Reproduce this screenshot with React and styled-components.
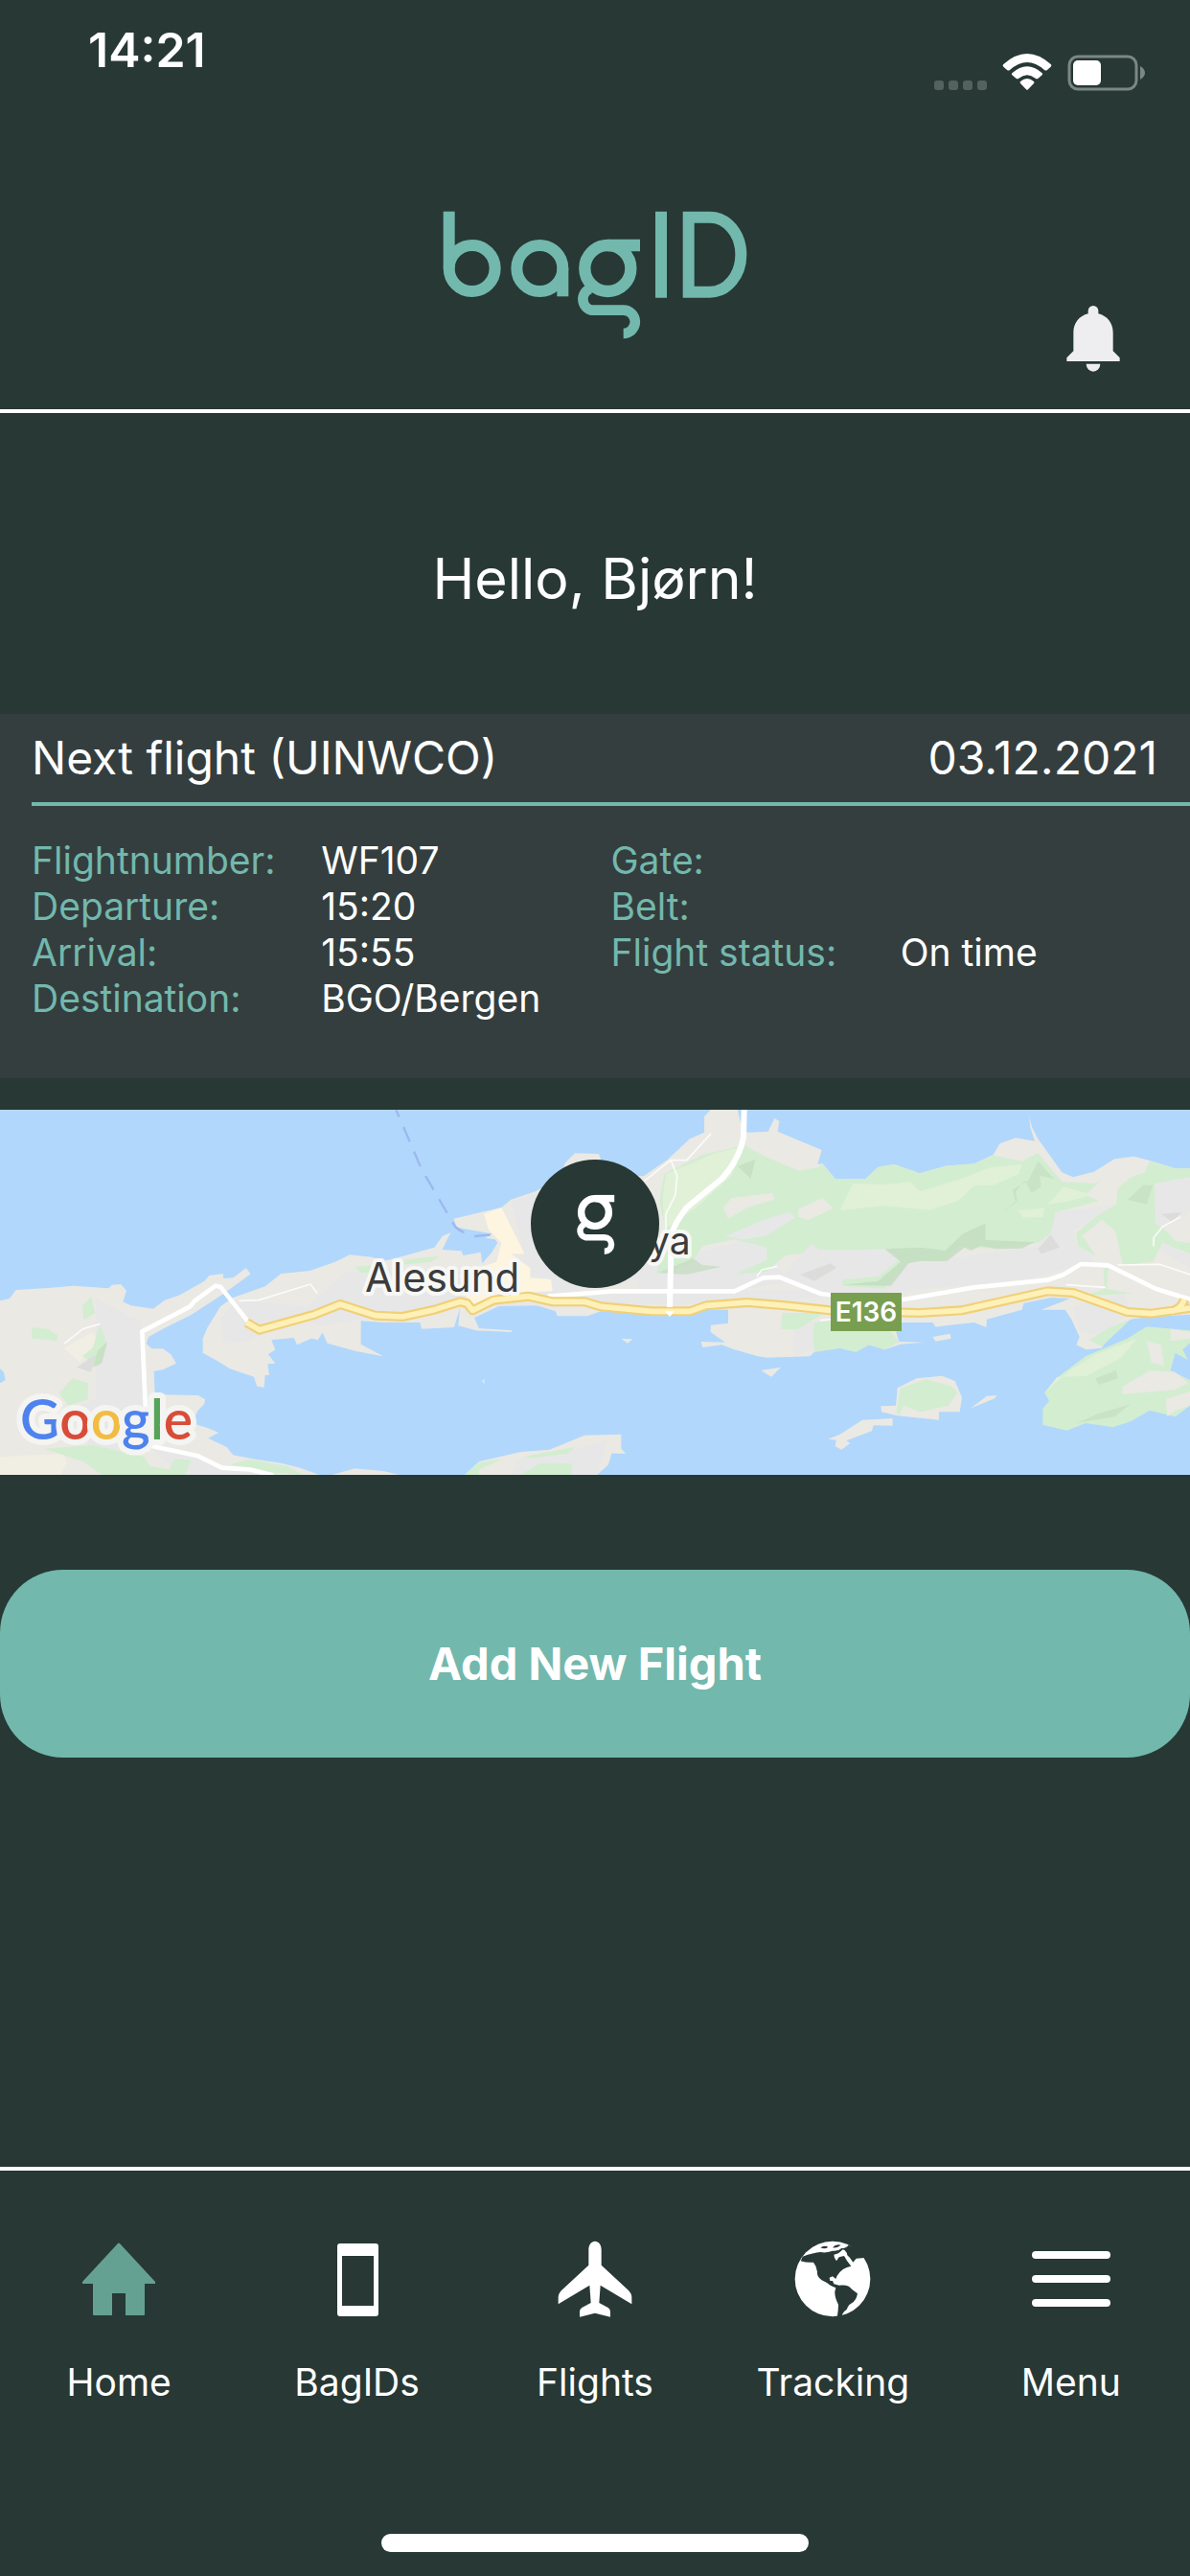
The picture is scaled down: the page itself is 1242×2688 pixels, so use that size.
import React, { useState } from "react";
import styled, { createGlobalStyle } from "styled-components";

const GlobalStyle = createGlobalStyle`
  * {
    box-sizing: border-box;
  }

  body {
    margin: 0;
    background: #273835;
    color: #fff;
    font-family: Inter, "Liberation Sans", sans-serif;
  }

  button {
    font-family: inherit;
    cursor: pointer;
  }
`;

const Page = styled.div`
  min-height: 100vh;
  display: flex;
  flex-direction: column;
`;

const Header = styled.header`
  border-bottom: 4px solid #fff;
`;

const StatusBar = styled.div`
  display: flex;
  justify-content: space-between;
  height: 95px;
  padding: 24px 46px 0 92px;
`;

const Clock = styled.time`
  font-size: 50px;
  line-height: 56px;
  font-weight: 600;
`;

const StatusIcons = styled.div`
  display: flex;
  align-items: flex-end;
  gap: 16px;
`;

const SignalDots = styled.div`
  display: flex;
  gap: 5px;
  padding-bottom: 1px;
`;

const Dot = styled.span`
  width: 10px;
  height: 10px;
  border-radius: 3px;
  background: #53625f;
`;

const HeaderRow = styled.div`
  display: grid;
  grid-template-columns: 1fr auto 1fr;
  min-height: 332px;
  padding: 125px 73px 39px;
`;

const BellButton = styled.button`
  grid-column: 3;
  justify-self: end;
  align-self: end;
  display: flex;
  padding: 0;
  border: none;
  background: none;
`;

const LogoBox = styled.div`
  grid-column: 2;
`;

const Main = styled.main`
  display: flex;
  flex-direction: column;
`;

const Greeting = styled.h1`
  margin: 0;
  padding: 131px 0 99px;
  font-size: 59px;
  line-height: 84px;
  font-weight: 400;
  text-align: center;
`;

const FlightCard = styled.section`
  padding: 0 0 59px 33px;
  background: #343e3e;
`;

const CardTitle = styled.div`
  display: flex;
  justify-content: space-between;
  align-items: center;
  height: 96px;
  padding-right: 34px;
  border-bottom: 4px solid #72b8ad;
  font-size: 48px;
  line-height: 60px;
`;

const CardHeading = styled.h2`
  margin: 0;
  font-size: inherit;
  font-weight: 400;
`;

const Details = styled.div`
  display: grid;
  grid-template-columns: 1fr 1fr;
  padding-top: 33px;
`;

const DetailList = styled.dl`
  display: grid;
  grid-template-columns: 1fr 1fr;
  align-content: start;
  margin: 0;
  font-size: 39px;
  line-height: 48px;
`;

const Term = styled.dt`
  color: #72b8ad;
  white-space: nowrap;
`;

const Value = styled.dd`
  margin: 0;
  white-space: nowrap;
`;

const MapBox = styled.section`
  margin-top: 33px;
  background: #b1d7fc;

  svg {
    display: block;
    width: 100%;
    height: auto;
  }
`;

const AddButton = styled.button`
  margin-top: 99px;
  padding: 68px 20px;
  border: none;
  border-radius: 66px;
  background: #72b8ad;
  color: #fff;
  font-size: 47px;
  line-height: 60px;
  font-weight: 700;
`;

const TabBar = styled.nav`
  margin-top: auto;
  border-top: 4px solid #fff;
`;

const Tabs = styled.div`
  display: grid;
  grid-template-columns: repeat(5, 1fr);
  padding-top: 73px;
`;

const Tab = styled.button`
  display: flex;
  flex-direction: column;
  align-items: center;
  gap: 44px;
  padding: 0;
  border: none;
  background: none;
  color: #fff;
  font-size: 39px;
  line-height: 48px;

  svg {
    color: ${({ $active }) => ($active ? "#64a193" : "#fff")};
  }
`;

const HomeIndicator = styled.div`
  width: 446px;
  height: 19px;
  margin: 134px auto 25px;
  border-radius: 10px;
  background: #fff;
`;

// the "g" is shared by the logo and the map marker
const LogoG = () => (
  <g fill="none" stroke="currentColor">
    <circle cx="615" cy="270" r="72" strokeWidth="37" />
    <line x1="615" y1="198" x2="716" y2="198" strokeWidth="37" />
    <path d="M560 334 A35 35 0 0 0 565 401 H664 A36 36 0 0 1 664 474" strokeWidth="32" />
  </g>
);

const Logo = () => (
  <svg width="318" height="134" viewBox="98 90 954 402" color="#72b8ad" role="img" aria-label="bagID">
    <g fill="none" stroke="currentColor" strokeWidth="36">
      <circle cx="190" cy="270" r="72" />
      <line x1="118" y1="92" x2="118" y2="270" />
      <circle cx="402" cy="270" r="72" />
      <line x1="474" y1="270" x2="474" y2="358" />
      <line x1="782" y1="92" x2="782" y2="362" />
      <path d="M868 110 H935 A97 117 0 0 1 935 344 H868 Z" />
    </g>
    <LogoG />
  </svg>
);

const WifiIcon = () => (
  <svg width="52" height="40" viewBox="0 0 156 120" fill="#fff">
    <path d="M4 36 Q0 40 4 44 L16 55 Q20 57 24 54 Q78 6 132 54 Q136 57 140 55 L152 44 Q156 40 152 36 Q78 -30 4 36Z" />
    <path d="M31 64 Q28 67 31 70 L44 81 Q48 83 52 80 Q78 59 104 80 Q108 83 112 81 L125 70 Q128 67 125 64 Q78 22 31 64Z" />
    <path d="M57 90 Q54 93 57 96 L75 115 Q78 118 81 115 L99 96 Q102 93 99 90 Q78 72 57 90Z" />
  </svg>
);

const BatteryIcon = () => (
  <svg width="82" height="38" viewBox="0 0 82 38">
    <rect x="2" y="2" width="70" height="34" rx="9" fill="none" stroke="#7b8784" strokeWidth="3" />
    <rect x="6" y="6" width="29" height="26" rx="5" fill="#fff" />
    <path d="M76 12 Q81 15 81 19 Q81 23 76 26Z" fill="#7b8784" />
  </svg>
);

const BellIcon = () => (
  <svg width="56" height="69" viewBox="0 0 168 207" fill="#eeeef0">
    <path d="M68 25 V16 A16 16 0 0 1 100 16 V25 C128 32 146 54 146 84 V142 L167 163 V174 H1 V163 L22 142 V84 C22 54 40 32 68 25Z" />
    <path d="M62 182 H106 A22 24 0 0 1 62 182Z" />
  </svg>
);

const HomeIcon = () => (
  <svg width="80" height="80" viewBox="0 0 80 80" fill="currentColor">
    <path d="M39 3 Q40 2 41 3 L78 43 V45 H67 V77 Q67 78 66 78 H47 V55 H33 V78 H14 Q13 78 13 77 V45 H2 V43Z" />
  </svg>
);

const PhoneIcon = () => (
  <svg width="80" height="80" viewBox="0 0 80 80" fill="currentColor">
    <path
      fillRule="evenodd"
      d="M22 3 H59 Q62 3 62 6 V76 Q62 79 59 79 H22 Q19 79 19 76 V6 Q19 3 22 3Z M24 16 V68 H57 V16Z"
    />
  </svg>
);

const PlaneIcon = () => (
  <svg width="80" height="80" viewBox="65 81 240 240" fill="currentColor">
    <path d="M185 83 C199 84 205 97 205 110 V158 L290 237 Q301 248 300 262 V280 L202 221 L198 276 L226 291 Q234 296 233 305 V320 L185 308 L137 320 V305 Q136 296 144 291 L172 276 L168 221 L70 280 V262 Q69 248 80 237 L165 158 V110 C165 97 171 84 185 83Z" />
  </svg>
);

const GlobeIcon = () => (
  <svg width="80" height="80" viewBox="810 84 240 240">
    <circle cx="930" cy="204" r="118" fill="currentColor" />
    <g fill="#273835">
      <path d="M836 134 Q870 122 892 120 Q908 124 930 116 Q948 118 958 108 Q972 108 980 98 L1040 120 L1030 138 L1004 140 L994 152 Q986 138 976 130 Q974 116 962 112 Q956 118 948 124 L934 128 L936 138 L942 148 L950 136 L966 132 Q974 148 988 164 Q960 168 944 194 L940 204 L930 196 L920 200 L922 210 L930 210 L934 220 L950 224 Q980 220 990 236 L1008 250 Q1004 272 990 280 Q980 284 974 300 Q962 306 956 326 H944 Q948 300 948 284 Q936 262 937 244 L940 232 Q920 224 912 216 L896 208 Q880 196 882 182 Q880 164 870 152 Q850 154 830 148Z" />
      <path d="M892 106 Q904 98 916 104 Q906 112 892 106Z M930 106 Q940 94 956 98 Q944 108 930 106Z" />
    </g>
  </svg>
);

const MenuIcon = () => (
  <svg width="84" height="80" viewBox="0 0 84 80" stroke="currentColor" strokeWidth="8" strokeLinecap="round">
    <path d="M5 15 H79 M5 40 H79 M5 65 H79" />
  </svg>
);

const Terrain = () => (
  <svg width="1242" height="381" viewBox="0 24 3726 1143" strokeLinejoin="round">
    {/* coast */}
    <g fill="#eae9e4">
      <path d="M0 622 L30 615 50 588 150 582 230 575 340 583 350 572 378 570 396 590 385 625 410 637 480 647 515 620 560 605 640 560 655 543 698 537 700 552 730 550 770 520 785 538 700 600 600 665 520 705 465 735 458 755 475 772 510 772 535 790 552 818 510 838 482 842 485 915 620 918 642 930 640 945 620 965 600 1005 650 1020 685 1035 652 1052 710 1080 730 1105 800 1118 880 1130 940 1145 1000 1167 0 1167Z" />
      <path d="M730 612 L830 577 880 537 970 528 1050 500 1095 478 1165 485 1200 498 1270 480 1360 455 1385 420 1412 408 1400 430 1385 462 1445 466 1450 480 1505 470 1510 505 1540 470 1558 440 1550 430 1520 425 1540 412 1430 392 1420 365 1570 330 1600 305 1680 278 1750 240 1770 190 1800 160 1875 162 1900 230 2015 232 2090 180 2160 115 2205 95 2205 45 2225 24 2310 24 2318 60 2340 95 2405 92 2425 50 2440 60 2435 92 2573 150 2560 195 2575 192 2615 240 2710 240 2750 203 2800 195 2880 223 2960 200 3050 193 3110 165 3130 130 3180 112 3240 122 3226 80 3222 45 3232 80 3250 115 3325 220 3360 235 3425 218 3490 178 3550 170 3600 183 3680 208 3726 208 3726 665 3600 672 3540 680 3500 705 3465 740 3450 770 3400 775 3370 760 3380 735 3355 680 3335 650 3260 650 3350 615 3290 612 3205 630 3200 650 3090 680 3088 705 3050 690 2960 700 2930 704 2920 690 2815 690 2806 720 2815 750 2893 752 2820 758 2770 775 2720 760 2680 782 2630 770 2550 782 2535 796 2400 800 2370 795 2300 775 2260 760 2200 768 2195 750 2270 752 2225 720 2225 698 2280 692 2280 650 2200 650 2160 665 2030 665 1880 655 1840 670 1745 670 1740 655 1660 630 1560 640 1485 675 1500 708 1605 715 1600 720 1490 715 1435 700 1440 645 1422 705 1320 710 1315 690 1200 690 1130 685 1130 758 1200 796 1115 780 1025 755 1010 722 995 745 975 740 930 760 920 738 850 745 862 775 840 790 862 818 838 820 843 855 830 855 827 893 805 890 795 860 720 835 680 810 635 785 635 740 650 705 690 640Z" />
      <path d="M1455 1167 L1500 1125 1630 1095 1720 1088 1830 1043 1945 1040 1945 1085 1960 1100 1915 1100 1905 1135 1870 1167Z" />
      <path d="M1040 1167 L1110 1147 1200 1155 1250 1167Z" />
      <path d="M2810 895 L2870 865 2950 857 2990 873 3012 925 3005 970 2940 970 2940 995 2890 990 2810 982 2760 970 2758 952 2805 950Z" />
      <path d="M3040 958 L3090 920 3120 918 3115 928Z" />
      <path d="M2593 1055 L2630 1040 2700 995 2795 990 2795 1013 2735 1012 2730 1030 2650 1060 2662 1068 2635 1088 2615 1078 2618 1058Z" />
      <path d="M2920 735 L2975 725 2978 740 2930 749Z M1945 740 L1982 742 1965 755Z M2383 840 L2445 830 2415 860Z M1510 875 L1516 865 1517 882Z" />
    </g>

    {/* built-up areas */}
    <g fill="#e7e7e8">
      <path d="M300 615 L370 650 400 670 440 680 460 1100 280 1080 230 960 300 930Z" />
      <path d="M690 680 L740 620 960 640 1080 535 1200 520 1440 530 1640 580 1900 600 2300 590 2500 590 2600 470 2800 470 2850 510 3250 450 3310 345 3495 322 3495 352 3360 400 3370 450 3420 470 3420 500 3200 560 2700 600 2320 630 1400 640 1010 700 930 680 770 750 700 755Z" />
      <path d="M1600 310 L1760 260 1900 400 2100 540 1750 600 1560 590 1640 470Z" />
      <path d="M2000 520 L2300 440 2420 340 2480 360 2400 500 2500 560 2300 590 2000 590Z" />
      <path d="M3615 255 L3726 230 3726 350 3640 390 3618 380Z M3360 640 L3520 600 3540 660 3440 730 3380 720Z M3630 410 L3680 460 3726 480 3726 520 3625 460Z" />
      <path d="M2485 690 L2550 680 2545 780 2485 795Z M1620 1120 L1830 1080 1900 1060 1870 1167 1600 1167Z" />
      <path d="M480 1090 L620 1110 700 1150 850 1167 560 1167Z" />
    </g>
    <path d="M1515 350 L1570 330 1590 370 1642 475 1600 475 1660 520 1660 550 1725 555 1730 592 1560 600 1490 640 1450 600 1440 540 1555 500 1570 440 1530 400Z" fill="#fdf5df" />
    <path d="M0 1110 L200 1100 210 1130 190 1167 0 1167Z M200 770 L290 720 310 740 250 815Z" fill="#f1eee4" />

    {/* parks and hills */}
    <g fill="#d3edd0">
      <path d="M2065 310 L2080 225 2200 165 2330 135 2400 172 2500 215 2560 205 2575 195 2615 240 2710 240 2750 203 2800 195 2880 223 2960 200 3050 193 3110 167 3200 185 3250 160 3325 250 3430 255 3512 195 3500 225 3400 290 3440 310 3305 345 3290 410 3250 440 3100 458 3000 450 2960 495 2840 500 2770 585 2635 575 2640 555 2750 545 2820 490 2780 460 2700 480 2570 460 2560 500 2540 470 2460 480 2400 530 2300 540 2400 495 2400 455 2300 430 2200 450 2160 510 2080 530 2055 535 2090 430Z" />
      <path d="M3495 320 L3500 270 3600 185 3680 208 3726 208 3726 235 3615 255 3618 380 3660 410 3726 440 3726 475 3640 440 3610 500 3510 510 3490 400 3450 370 3390 420 3430 480 3375 450 3370 410 3430 360Z" />
      <path d="M2550 690 L2600 685 2780 710 2815 750 2770 775 2720 760 2680 782 2630 770 2550 782 2545 740Z M2450 660 L2580 660 2500 710 2445 712Z M3410 745 L3475 705 3540 680 3450 765Z M3455 520 L3470 520 3465 585 3545 600 3400 605 3458 585Z" />
      <path d="M3265 1010 L3265 960 3285 935 3270 908 3320 855 3400 795 3530 740 3590 703 3726 715 3726 755 3703 775 3720 808 3680 785 3665 840 3726 870 3726 950 3680 985 3600 965 3540 1000 3485 1018 3400 1005 3340 1028 3305 1020Z" />
      <path d="M2820 895 L2900 868 2980 890 2998 908 2970 950 2880 970 2830 950 2815 980 2806 970Z" />
      <path d="M100 705 L150 710 180 730 178 747 100 740Z M258 640 L285 608 298 660 262 682Z M312 695 L335 760 310 830 258 795 290 770Z M228 865 L275 880 275 930 215 950 185 910Z" />
      <path d="M140 1085 L290 1073 450 1110 470 1140 530 1150 545 1118 598 1120 580 1167 320 1167 260 1125Z M720 1135 L780 1118 900 1140 950 1167 860 1160Z M1455 1167 L1500 1128 1570 1118 1500 1150 1500 1167Z M1640 1110 L1800 1080 1780 1100 1660 1115Z M1630 1167 L1690 1130 1790 1130 1790 1167Z M1110 515 L1160 512 1200 518 1190 535 1130 535Z M1250 495 L1375 482 1350 500 1250 510Z" />
    </g>
    <g fill="#e0f1d8">
      <path d="M2075 300 L2085 225 2240 160 2330 138 2290 230 2180 330 2080 400Z M2630 340 L2670 255 2770 258 2850 250 2880 280 3010 240 3100 205 3200 195 3190 225 3110 260 3050 262 3000 310 2910 338 2770 325Z" />
      <path d="M3275 905 L3350 840 3430 790 3560 740 3510 800 3400 858 3310 860Z M3280 320 L3330 265 3420 290 3350 310Z M3185 340 L3270 332 3265 360 3205 362Z" />
    </g>
    <g fill="#eae9e4">
      <path d="M2500 335 L2575 300 2608 332 2530 370 2500 360Z M3400 290 L3500 190 3600 183 3585 220 3490 255 3430 290Z M3385 420 L3450 370 3495 410 3515 510 3440 510 3430 450Z" />
      <path d="M3515 890 L3600 840 3680 845 3720 880 3680 900 3515 915Z M3590 748 L3635 760 3645 825 3605 815Z M3650 930 L3726 905 3726 950 3680 965 3655 985Z M3665 710 L3726 720 3726 740 3665 748Z M3650 400 L3726 345 3726 440 3680 435Z" />
      <path d="M2265 330 L2290 300 2420 285 2425 305 2340 330 2280 365Z" />
    </g>
    <g fill="#e7e7e8">
      <path d="M2400 365 L2470 345 2490 362 2400 418 2330 430 2270 420Z M2460 530 L2540 445 2570 465 2780 460 2820 490 2750 545 2640 555 2600 580 2480 570Z" />
    </g>
    <g fill="#c3dcc0">
      <path d="M2770 460 L2880 455 2960 465 3015 412 3085 380 3085 432 3240 438 3200 458 3120 460 3070 450 3040 465 3020 455 2965 498 2880 498 2845 505 2790 575 2640 572 2750 560 2820 500Z" opacity="0.8" />
      <path d="M3140 345 L3180 310 3170 275 3220 245 3250 185 3300 240 3255 230 3260 265 3230 285 3210 245 3180 280 3185 310Z M3530 305 L3580 260 3610 260 3590 320Z M3430 865 L3495 840 3500 865 3440 885Z M3370 1005 L3440 975 3540 945 3490 985 3400 1000Z" opacity="0.6" />
      <path d="M2060 535 L2170 490 2200 510 2260 515 2150 540Z M2310 200 L2365 180 2350 240Z M305 780 L335 750 320 815 290 830Z" opacity="0.7" />
    </g>
    <path d="M2505 540 L2600 505 2620 518 2550 560Z M3250 460 L3290 415 3318 455 3260 475Z M3635 350 L3700 345 3670 375Z M240 830 L300 790 285 845Z" fill="#dcdcdb" />
    <path d="M0 835 L12 845 17 870 0 880Z" fill="#b1d7fc" />

    {/* ferry line */}
    <path d="M1240 24 L1320 210 1425 390 Q1450 412 1485 420 L1540 415" fill="none" stroke="#9db8ee" strokeWidth="7" strokeDasharray="50 34" strokeDashoffset="25" />

    {/* roads */}
    <g fill="none" stroke="#fff" strokeLinecap="round">
      <path d="M203 755 L260 710 312 695 M750 622 L810 620 972 570 992 597 M2020 245 L2100 182 2150 182 2225 100 M2100 182 L2120 230 2115 290 2085 350 2085 400 M2570 683 L2610 680 M3340 572 L3460 580 M3500 510 L3630 508 3726 540 M3612 450 L3612 425 3640 390 3695 360 M2370 545 L2385 525 2432 515" strokeWidth="5" opacity="0.8" />
      <path d="M456 965 L445 718 595 640 610 622 675 575 690 578 775 685 M480 1078 L620 1108 695 1145 780 1150 850 1167" strokeWidth="14" />
      <path d="M1720 608 L1920 592 2300 592 2390 550 2440 548 2570 600 2620 606 2830 618 3050 580 3280 557 3330 540 3385 507 3470 511 3620 585 3726 617" strokeWidth="14" />
      <path d="M2330 24 L2328 110 Q2315 180 2260 240 L2150 330 Q2105 390 2102 420 L2097 650" strokeWidth="18" strokeLinecap="butt" />
    </g>
    <g fill="none">
      {["#f0d078", "#fdf1b8"].map((color, i) => (
        <path
          key={color}
          stroke={color}
          strokeWidth={i === 0 ? 30 : 17}
          d="M772 690 L812 713 985 665 1065 633 1175 668 1260 672 1360 650 1440 625 1462 630 1480 652 1545 620 1655 608 1730 625 1830 625 1880 640 2040 655 2160 655 2210 637 2340 627 2460 637 2600 652 2880 660 3010 652 3280 592 3360 597 3530 657 3605 662 3726 645 M3670 655 Q3700 645 3708 618"
        />
      ))}
    </g>
    <path d="M2082 655 L2112 655 2097 672Z M2088 600 H2106 V642 H2088Z" fill="#fff" />
  </svg>
);

const MapLabel = styled.text`
  font-family: Inter, "Liberation Sans", sans-serif;
  font-size: ${({ $small }) => ($small ? 39 : 42)}px;
  fill: #3c3c3c;
  stroke: #f7f7f5;
  stroke-width: 8px;
  stroke-linejoin: round;
  paint-order: stroke;
`;

const RoadLabel = styled.text`
  font-family: Inter, "Liberation Sans", sans-serif;
  font-size: 28px;
  font-weight: 600;
  fill: #fff;
  text-anchor: middle;
`;

const GoogleMark = styled.text`
  font-family: Lato, "Open Sans", sans-serif;
  font-size: 57px;
  font-weight: 600;
  stroke: #f4f4f2;
  stroke-width: 12px;
  stroke-linejoin: round;
  paint-order: stroke;
`;

const googleLetters = [
  ["G", "#4e82ee"],
  ["o", "#d94c38"],
  ["o", "#f2bc42"],
  ["g", "#4e82ee"],
  ["l", "#55a45a"],
  ["e", "#d94c38"],
];

const FlightMap = () => (
  <MapBox aria-label="Map">
    <svg viewBox="0 0 1242 381">
      <Terrain />
      <MapLabel x="381" y="190">Alesund</MapLabel>
      <MapLabel x="677" y="151" $small>ya</MapLabel>
      <rect x="867" y="191" width="74" height="40" fill="#789f4f" />
      <RoadLabel x="904" y="221">E136</RoadLabel>
      <GoogleMark x="21" y="344">
        {googleLetters.map(([letter, color], i) => (
          <tspan key={i} fill={color}>{letter}</tspan>
        ))}
      </GoogleMark>
      <circle cx="621" cy="119" r="67" fill="#273835" />
      <g transform="translate(498 53) scale(0.2)" color="#fff">
        <LogoG />
      </g>
    </svg>
  </MapBox>
);

const flight = {
  code: "UINWCO",
  date: "03.12.2021",
  left: [
    ["Flightnumber:", "WF107"],
    ["Departure:", "15:20"],
    ["Arrival:", "15:55"],
    ["Destination:", "BGO/Bergen"],
  ],
  right: [
    ["Gate:", ""],
    ["Belt:", ""],
    ["Flight status:", "On time"],
  ],
};

const tabs = [
  { name: "Home", Icon: HomeIcon },
  { name: "BagIDs", Icon: PhoneIcon },
  { name: "Flights", Icon: PlaneIcon },
  { name: "Tracking", Icon: GlobeIcon },
  { name: "Menu", Icon: MenuIcon },
];

const FlightDetails = ({ items }) => (
  <DetailList>
    {items.map(([label, value]) => (
      <React.Fragment key={label}>
        <Term>{label}</Term>
        <Value>{value}</Value>
      </React.Fragment>
    ))}
  </DetailList>
);

const App = () => {
  const [activeTab, setActiveTab] = useState("Home");

  return (
    <Page>
      <GlobalStyle />
      <Header>
        <StatusBar>
          <Clock>14:21</Clock>
          <StatusIcons>
            <SignalDots>
              <Dot />
              <Dot />
              <Dot />
              <Dot />
            </SignalDots>
            <WifiIcon />
            <BatteryIcon />
          </StatusIcons>
        </StatusBar>
        <HeaderRow>
          <LogoBox>
            <Logo />
          </LogoBox>
          <BellButton type="button" aria-label="Notifications">
            <BellIcon />
          </BellButton>
        </HeaderRow>
      </Header>

      <Main>
        <Greeting>Hello, Bjørn!</Greeting>
        <FlightCard>
          <CardTitle>
            <CardHeading>Next flight ({flight.code})</CardHeading>
            <span>{flight.date}</span>
          </CardTitle>
          <Details>
            <FlightDetails items={flight.left} />
            <FlightDetails items={flight.right} />
          </Details>
        </FlightCard>
        <FlightMap />
        <AddButton type="button">Add New Flight</AddButton>
      </Main>

      <TabBar>
        <Tabs>
          {tabs.map(({ name, Icon }) => (
            <Tab key={name} type="button" $active={name === activeTab} onClick={() => setActiveTab(name)}>
              <Icon />
              {name}
            </Tab>
          ))}
        </Tabs>
        <HomeIndicator />
      </TabBar>
    </Page>
  );
};

export default App;
